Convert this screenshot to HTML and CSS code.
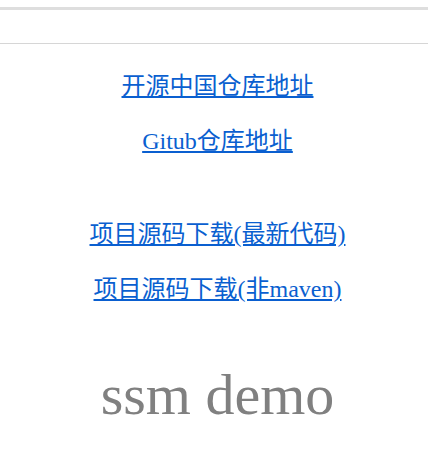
FILE: index.html
```html
<!DOCTYPE html>
<html>
<head>
<meta charset="utf-8">
<link rel="stylesheet" href="styles.css">
</head>
<body>
<div class="topbar"></div>
<div class="content">
  <div class="links">
    <a class="link" href="#">开源中国仓库地址</a>
    <a class="link" href="#">Gitub仓库地址</a>
    <a class="link gap" href="#">项目源码下载(最新代码)</a>
    <a class="link" href="#">项目源码下载(非maven)</a>
  </div>
  <h1 class="title">ssm demo</h1>
</div>
</body>
</html>
```
FILE: styles.css
```css
html, body {
  margin: 0;
  padding: 0;
  background: #fff;
}
body {
  font-family: "Liberation Serif", "Noto Sans CJK SC", serif;
}
.topbar {
  margin-top: 7px;
  height: 33px;
  border-top: 3px solid #dedede;
  border-bottom: 1px solid #d6d6d6;
}
.content {
  padding-left: 7px;
}
.links {
  display: flex;
  flex-direction: column;
  align-items: center;
  gap: 25px;
  padding-top: 27px;
}
.link {
  font-size: 24px;
  line-height: 30px;
  color: #0a5fd0;
  text-decoration: underline;
}
.link.gap {
  margin-top: 38px;
}
.title {
  margin: 59px 0 0;
  text-align: center;
  font-weight: normal;
  font-size: 58px;
  line-height: 64px;
  color: #808080;
}
```
